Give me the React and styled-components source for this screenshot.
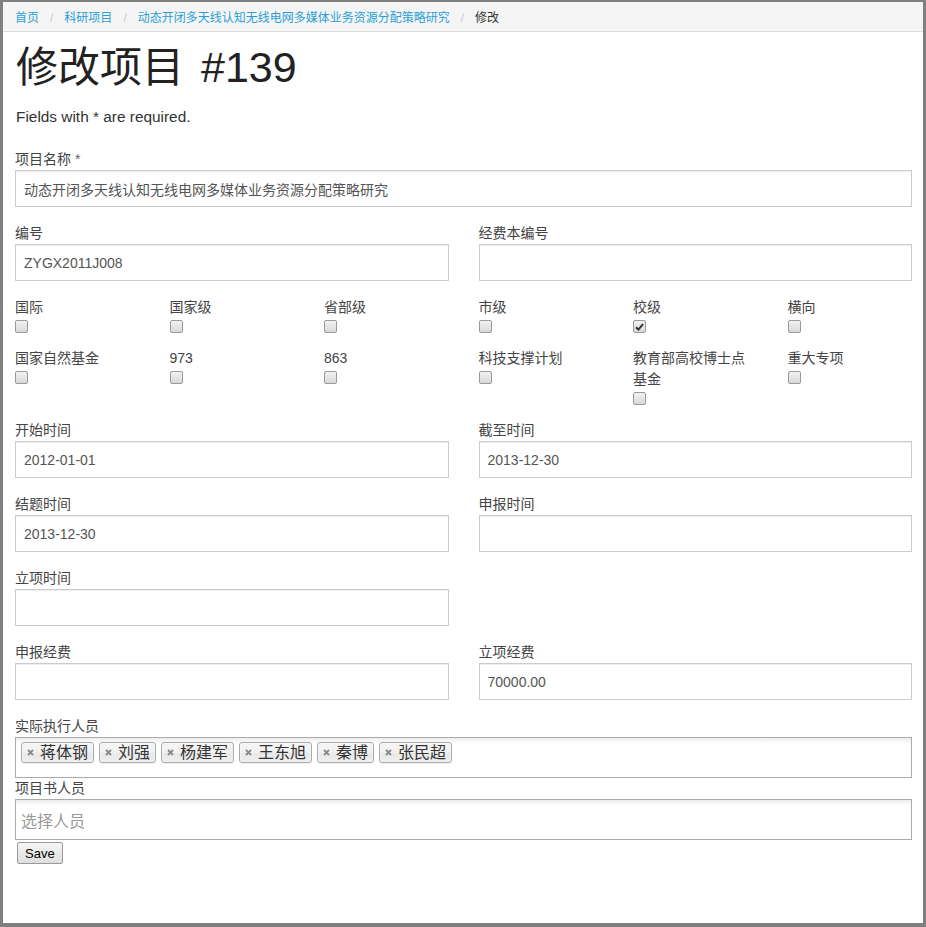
import React from 'react';
import styled, { createGlobalStyle } from 'styled-components';

const GlobalStyle = createGlobalStyle`
  html, body {
    margin: 0;
    padding: 0;
    background: #fff;
  }
  body {
    font-family: "Liberation Sans", "Noto Sans CJK SC", sans-serif;
    font-size: 14px;
    color: #333;
  }
  * {
    box-sizing: border-box;
  }
`;

const Frame = styled.div`
  height: 927px;
  border: 3px solid #808080;
  border-top-width: 2px;
  border-bottom-width: 4px;
  overflow: hidden;
`;

const Breadcrumb = styled.ol`
  display: flex;
  align-items: center;
  height: 30px;
  margin: 0;
  padding: 0 12px;
  list-style: none;
  background: #f5f5f5;
  border-bottom: 1px solid #dddddd;
  font-size: 12px;
`;

const Crumb = styled.li`
  color: ${(p) => (p.$active ? '#333' : '#2a9fd6')};

  &:not(:first-child)::before {
    content: '/';
    padding: 0 11px;
    color: #cccccc;
  }
`;

const Content = styled.div`
  padding: 0 11px 0 12px;
`;

const Title = styled.h1`
  margin: 10px 0 0 1px;
  font-size: 42px;
  line-height: 50px;
  font-weight: 400;
  color: #222;
`;

const TitleNum = styled.span`
  margin-left: 5px;
  font-size: 43px;
`;

const Note = styled.p`
  margin: 14px 0 22px 1px;
  font-size: 15.4px;
  line-height: 20px;
  color: #333;
`;

const Row = styled.div`
  display: grid;
  grid-template-columns: 1fr 1fr;
  column-gap: 30px;
`;

const Group = styled.div`
  margin-bottom: ${(p) => (p.$tight ? '0' : '16px')};
`;

const Label = styled.label`
  display: block;
  font-size: 14px;
  line-height: 21px;
  color: #444;
`;

const Required = styled.span`
  color: #666;
`;

const Input = styled.input`
  display: block;
  width: 100%;
  height: 37px;
  margin: 0;
  padding: 0 8px;
  border: 1px solid #cccccc;
  border-radius: 0;
  box-shadow: inset 0 1px 1px rgba(0, 0, 0, 0.075);
  font-family: "Liberation Sans", "Noto Sans CJK SC", sans-serif;
  font-size: 14px;
  color: #555;
  background: #fff;
  outline: none;
`;

const CheckGrid = styled.div`
  display: grid;
  grid-template-columns: repeat(3, 1fr);
  align-content: start;
  column-gap: 30px;
`;

const CheckCell = styled.div`
  margin-bottom: 15px;
`;

const Box = styled.span`
  display: flex;
  align-items: center;
  justify-content: center;
  width: 13px;
  height: 13px;
  margin-top: 2px;
  border: 1px solid #9a9a9a;
  border-radius: 2px;
  background: linear-gradient(#f2f2f2, #d8d8d8);
`;

const Select = styled.div`
  display: flex;
  flex-wrap: wrap;
  align-items: flex-start;
  height: 41px;
  padding: 4px 0 0;
  border: 1px solid #aaaaaa;
  background: linear-gradient(to bottom, #eeeeee 1%, #ffffff 15%);
  font-size: 16px;
`;

const Tag = styled.span`
  position: relative;
  display: flex;
  align-items: center;
  height: 21px;
  margin-left: 5px;
  padding: 0 5px 0 18px;
  border: 1px solid #aaaaaa;
  border-radius: 3px;
  background: linear-gradient(#f4f4f4 20%, #f0f0f0 50%, #e8e8e8 52%, #eeeeee 100%);
  box-shadow: inset 0 0 2px #fff, 0 1px 0 rgba(0, 0, 0, 0.05);
  color: #333;
  line-height: 16px;
`;

const TagClose = styled.svg`
  position: absolute;
  left: 5px;
  top: 6px;
`;

const Placeholder = styled.span`
  padding: 8px 0 0 5px;
  color: #999;
  font-size: 16px;
  line-height: 20px;
`;

const SaveButton = styled.button`
  margin: 2px 0 0 2px;
  height: 22px;
  padding: 0 7px;
  border: 1px solid #9a9a9a;
  border-radius: 2px;
  background: linear-gradient(#f6f6f6, #dedede);
  font-family: "Liberation Sans", sans-serif;
  font-size: 13px;
  color: #000;
`;

const checksLeft = [
  ['国际', false],
  ['国家级', false],
  ['省部级', false],
  ['国家自然基金', false],
  ['973', false],
  ['863', false],
];

const checksRight = [
  ['市级', false],
  ['校级', true],
  ['横向', false],
  ['科技支撑计划', false],
  ['教育部高校博士点基金', false],
  ['重大专项', false],
];

const people = ['蒋体钢', '刘强', '杨建军', '王东旭', '秦博', '张民超'];

const CheckItem = ({ label, checked }) => (
  <CheckCell>
    <Label>{label}</Label>
    <Box>
      {checked && (
        <svg width="9" height="8" viewBox="0 0 9 8">
          <path d="M1 4.2 L3.4 6.6 L8 1.2" fill="none" stroke="#333" strokeWidth="2" />
        </svg>
      )}
    </Box>
  </CheckCell>
);

const Field = ({ label, value, required }) => (
  <Group>
    <Label>
      {label}
      {required && <Required> *</Required>}
    </Label>
    <Input defaultValue={value || ''} />
  </Group>
);

const App = () => (
  <>
    <GlobalStyle />
    <Frame>
      <Breadcrumb>
        <Crumb>首页</Crumb>
        <Crumb>科研项目</Crumb>
        <Crumb>动态开闭多天线认知无线电网多媒体业务资源分配策略研究</Crumb>
        <Crumb $active>修改</Crumb>
      </Breadcrumb>
      <Content>
        <Title>
          修改项目<TitleNum> #139</TitleNum>
        </Title>
        <Note>Fields with * are required.</Note>

        <Field label="项目名称" required value="动态开闭多天线认知无线电网多媒体业务资源分配策略研究" />

        <Row>
          <Field label="编号" value="ZYGX2011J008" />
          <Field label="经费本编号" />
        </Row>

        <Row>
          <CheckGrid>
            {checksLeft.map(([l, c]) => (
              <CheckItem key={l} label={l} checked={c} />
            ))}
          </CheckGrid>
          <CheckGrid>
            {checksRight.map(([l, c]) => (
              <CheckItem key={l} label={l} checked={c} />
            ))}
          </CheckGrid>
        </Row>

        <Row>
          <Field label="开始时间" value="2012-01-01" />
          <Field label="截至时间" value="2013-12-30" />
        </Row>
        <Row>
          <Field label="结题时间" value="2013-12-30" />
          <Field label="申报时间" />
        </Row>
        <Row>
          <Field label="立项时间" />
        </Row>
        <Row>
          <Field label="申报经费" />
          <Field label="立项经费" value="70000.00" />
        </Row>

        <Group $tight>
          <Label>实际执行人员</Label>
          <Select>
            {people.map((p) => (
              <Tag key={p}>
                <TagClose width="7" height="7" viewBox="0 0 7 7">
                  <path d="M1 1 L6 6 M6 1 L1 6" stroke="#888" strokeWidth="1.8" />
                </TagClose>
                {p}
              </Tag>
            ))}
          </Select>
        </Group>
        <Group $tight>
          <Label>项目书人员</Label>
          <Select>
            <Placeholder>选择人员</Placeholder>
          </Select>
        </Group>
        <SaveButton>Save</SaveButton>
      </Content>
    </Frame>
  </>
);

export default App;
